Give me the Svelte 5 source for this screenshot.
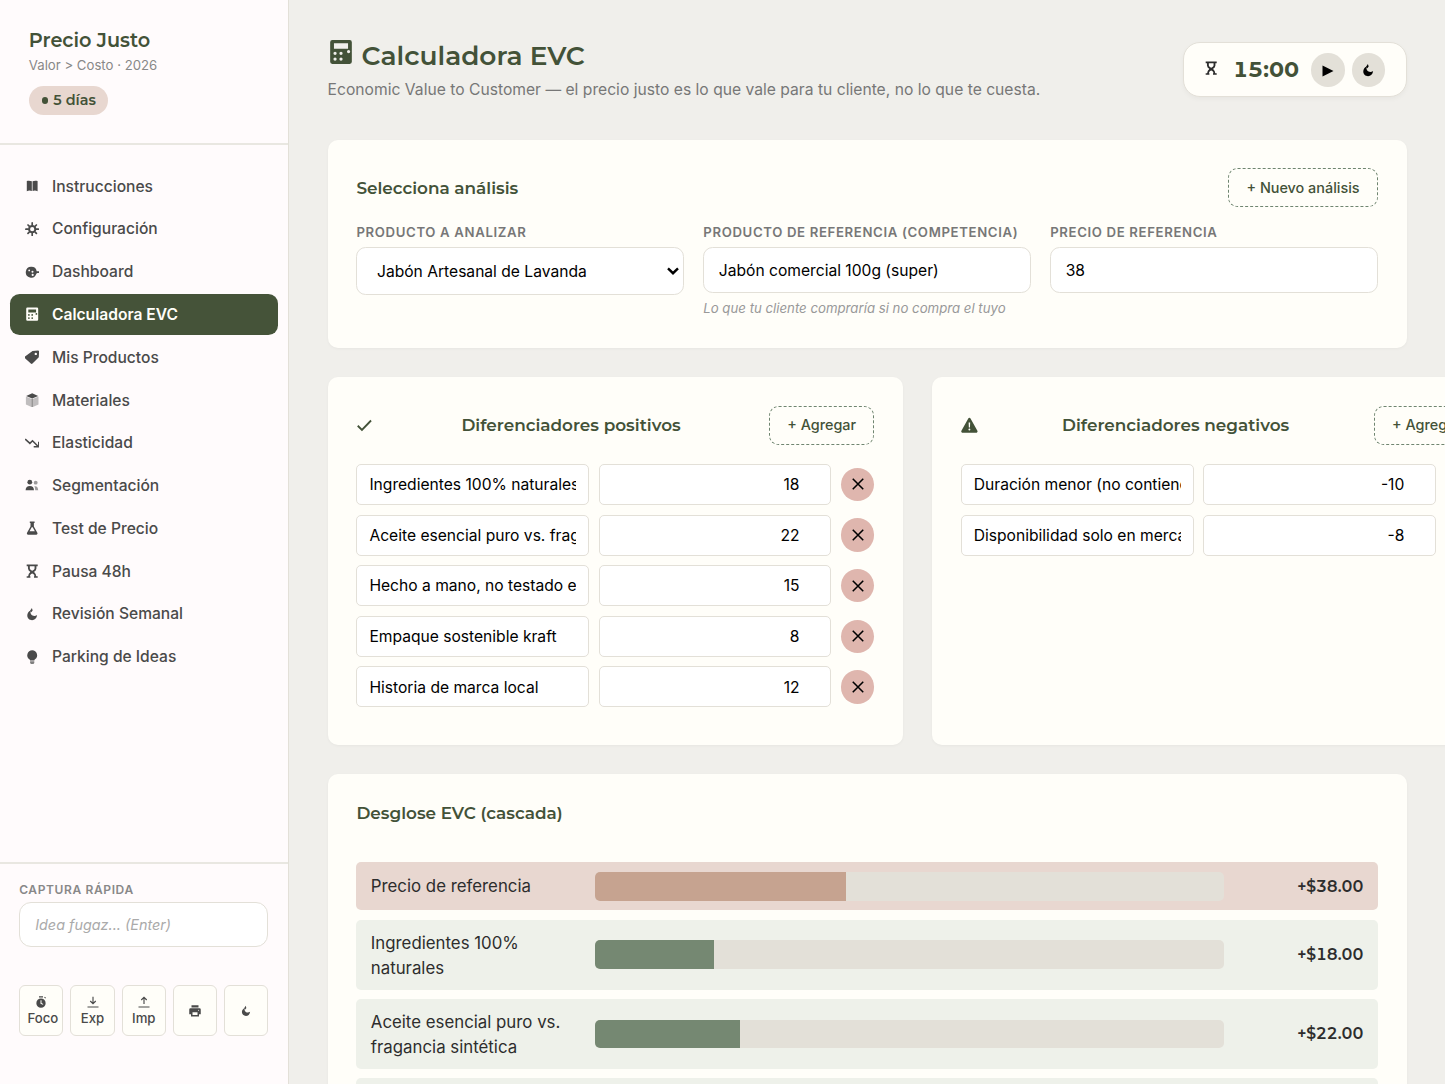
<script lang="ts">
	type Item = { name: string; value: number };

	const navItems = [
		{ icon: 'book', label: 'Instrucciones' },
		{ icon: 'gear', label: 'Configuración' },
		{ icon: 'palette', label: 'Dashboard' },
		{ icon: 'calc', label: 'Calculadora EVC' },
		{ icon: 'tag', label: 'Mis Productos' },
		{ icon: 'box', label: 'Materiales' },
		{ icon: 'trend', label: 'Elasticidad' },
		{ icon: 'people', label: 'Segmentación' },
		{ icon: 'flask', label: 'Test de Precio' },
		{ icon: 'hourglass', label: 'Pausa 48h' },
		{ icon: 'moon', label: 'Revisión Semanal' },
		{ icon: 'bulb', label: 'Parking de Ideas' }
	];

	const tools = [
		{ icon: 'timer', label: 'Foco' },
		{ icon: 'download', label: 'Exp' },
		{ icon: 'upload', label: 'Imp' },
		{ icon: 'printer', label: '' },
		{ icon: 'moon', label: '' }
	];

	let active = $state('Calculadora EVC');
	let idea = $state('');
	let reference = $state('Jabón comercial 100g (super)');
	let referencePrice = $state('38');

	let positives: Item[] = $state([
		{ name: 'Ingredientes 100% naturales', value: 18 },
		{ name: 'Aceite esencial puro vs. fragancia sintética', value: 22 },
		{ name: 'Hecho a mano, no testado en animales', value: 15 },
		{ name: 'Empaque sostenible kraft', value: 8 },
		{ name: 'Historia de marca local', value: 12 }
	]);
	let negatives: Item[] = $state([
		{ name: 'Duración menor (no contiene conservadores)', value: -10 },
		{ name: 'Disponibilidad solo en mercados', value: -8 }
	]);

	// The widest bar would be the EVC total
	const scale = 95;
	let cascade = $derived([
		{ name: 'Precio de referencia', value: Number(referencePrice), kind: 'base' },
		...positives.map((p) => ({ ...p, kind: 'plus' })),
		...negatives.map((n) => ({ ...n, kind: 'minus' }))
	]);

	function money(n: number): string {
		return (n < 0 ? '-' : '+') + '$' + Math.abs(n).toFixed(2);
	}

	function add(list: Item[]) {
		list.push({ name: '', value: 0 });
	}

	function remove(list: Item[], i: number) {
		list.splice(i, 1);
	}
</script>

{#snippet icon(name: string)}
	<svg class="icon" viewBox="0 0 24 24" fill="currentColor" aria-hidden="true">
		{#if name === 'book'}
			<path d="M3 3.500c3-.9 5.600-.7 8.400.4v16C8.600 18.800 6 18.600 3 20.500zM21 3.500c-3-.9-5.600-.7-8.400.4v16c2.800-1.100 5.400-1.300 8.400.6z" />
		{:else if name === 'gear'}
			<g fill="none" stroke="currentColor">
				<circle cx="12" cy="12" r="5.200" stroke-width="3.400" />
				<path stroke-width="2.800" stroke-linecap="round" d="M12 5V1.500M12 22.500V19M5 12H1.500M22.500 12H19M7 7 5 5M19 19l-2-2M7 17l-2 2M19 5l-2 2" />
			</g>
		{:else if name === 'palette'}
			<path fill-rule="evenodd" d="M10.500 3a9 9 0 1 0 8.300 12c.4-1 1-1.500 2-1.500H23a1 1 0 0 0 1-1v-1a1 1 0 0 0-1-1h-3.500A9 9 0 0 0 10.500 3zM7 7.500a1.500 1.500 0 1 1 0 3 1.500 1.500 0 0 1 0-3zm5.500 2a1.700 1.700 0 1 1 0 3.400 1.700 1.700 0 0 1 0-3.400zm.3 5.200a1.800 1.800 0 1 1 0 3.600 1.800 1.800 0 0 1 0-3.600z" />
		{:else if name === 'calc'}
			<path fill-rule="evenodd" d="M4 1h16a2 2 0 0 1 2 2v18a2 2 0 0 1-2 2H4a2 2 0 0 1-2-2V3a2 2 0 0 1 2-2zm1.500 3v5h13V4zM6.500 11.700a1.500 1.500 0 1 0 0 3 1.500 1.500 0 0 0 0-3zm5.500 0a1.500 1.500 0 1 0 0 3 1.500 1.500 0 0 0 0-3zm7-1.600a1.500 1.500 0 1 0 0 3 1.500 1.500 0 0 0 0-3zM6.500 17a1.500 1.500 0 1 0 0 3 1.500 1.500 0 0 0 0-3zm5.500 0a1.500 1.500 0 1 0 0 3 1.500 1.500 0 0 0 0-3z" />
		{:else if name === 'tag'}
			<path fill-rule="evenodd" d="M12.500 1.500 22 1a1.500 1.500 0 0 1 1.500 1.500L23 12 12.500 22.500a2 2 0 0 1-2.800 0L-.3 13.700a2 2 0 0 1 0-2.800zM18 4.500a2 2 0 1 0 0 4 2 2 0 0 0 0-4z" />
		{:else if name === 'box'}
			<path d="m12 .5 10 4.300-10 4.400L2 4.800z" />
			<path opacity=".35" d="M1.500 6 11.200 10v13.500L1.500 19zM22.500 6 12.800 10v13.500l9.700-4.500z" />
			<path opacity=".7" d="M11.100 9.500h1.800v14h-1.800z" />
		{:else if name === 'trend'}
			<path fill="none" stroke="currentColor" stroke-width="2.600" d="m.3 5 7.900 7.200 4.300-4.200 9.500 9.500M23 9.500v8.500h-8.500" />
		{:else if name === 'people'}
			<circle cx="8" cy="7" r="4" />
			<path d="M1 20.500c0-4.500 2.700-7 7-7s7 2.500 7 7z" />
			<circle cx="17.800" cy="7.800" r="3.200" opacity=".55" />
			<path opacity=".55" d="M15.500 13.800c4.200-.8 6.500 2 6.500 6.700h-5c0-2.800-.4-4.900-1.500-6.700z" />
		{:else if name === 'flask'}
			<path fill-rule="evenodd" d="M8 1h8v2.200h-1.200V9l5.800 10.700c.8 1.600 0 3.300-1.800 3.300H5.200c-1.800 0-2.600-1.700-1.800-3.300L9.200 9V3.200H8zM11.200 10.500l-3.600 6.800h8.800l-3.600-6.800z" />
		{:else if name === 'hourglass'}
			<path d="M2.800 1h18.400v2.600H2.800zM2.800 20.400H9V23H2.800zM15 20.400h6.200V23H15z" />
			<path fill="none" stroke="currentColor" stroke-width="3.100" d="M6.500 2.500v5c0 4 4 4 8 7.500 2.500 2 3 4 3 6.500M17.500 2.500v5c0 4-4 4-8 7.500-2.500 2-3 4-3 6.500" />
			<path d="M9 13.500h6l2 4.500-5-2.500L7 18z" />
		{:else if name === 'moon'}
			<path d="M9.500 6c-1.200 3.500.2 7.800 4 8.800 2.400.6 4.500.1 6.700-1.300-.6 5.500-4 8.500-8.400 8.500-4.600 0-8-3.300-8-7.800 0-3.500 2-6.800 5.700-8.200z" />
			<path d="M8.200 6.500 11.500 1.500l1.200 4.500-2.200 2.800z" />
		{:else if name === 'bulb'}
			<path d="M12 .5a8.300 8.300 0 0 1 4.800 15c-.8.6-1.200 1.200-1.200 2.200H8.400c0-1-.4-1.600-1.200-2.200A8.300 8.300 0 0 1 12 .5z" />
			<path opacity=".7" d="M8.500 18.800h7v2.200c0 1.500-1.200 2.500-2.500 2.500h-2c-1.300 0-2.500-1-2.500-2.500z" />
		{:else if name === 'timer'}
			<path fill-rule="evenodd" d="M12 5a9.300 9.300 0 1 1 0 18.600A9.300 9.300 0 0 1 12 5zm-1 3.500v7l5 2 .6-1.700-3.600-1.600V8.500zM8 .5h8v2.300H8zM19.500 1.500l2.500 2-1.200 1.300-2.500-2z" />
		{:else if name === 'download'}
			<path fill="none" stroke="currentColor" stroke-width="2.300" d="M12 1.500v14M6.500 10l5.500 5.500 5.500-5.500M1 22h22" />
		{:else if name === 'upload'}
			<path fill="none" stroke="currentColor" stroke-width="2.300" d="M12 16V2.500M6.500 8 12 2.500 17.500 8M1 22h22" />
		{:else if name === 'printer'}
			<path fill-rule="evenodd" d="M5 .5h14V5H5zM3 6.500h18a2.500 2.500 0 0 1 2.500 2.500v9.500H20V23H4v-4.500H.5V9A2.500 2.500 0 0 1 3 6.500zm4 8V20h10v-5.500zM19 9.500a1 1 0 1 0 0 2 1 1 0 0 0 0-2z" />
		{:else if name === 'check'}
			<path fill="none" stroke="currentColor" stroke-width="2.600" d="m2.500 12.500 6 6L21.500 5" />
		{:else if name === 'warning'}
			<path fill-rule="evenodd" d="M12 1c.7 0 1.300.4 1.600 1l9.800 17.800c.7 1.300-.2 2.700-1.600 2.700H2.200c-1.400 0-2.300-1.400-1.600-2.700L10.400 2c.3-.6.900-1 1.600-1zM10.900 8l.3 7h1.600l.3-7zm1.100 8.500a1.400 1.400 0 1 0 0 2.800 1.400 1.400 0 0 0 0-2.800z" />
		{:else if name === 'close'}
			<path fill="none" stroke="currentColor" stroke-width="2.600" d="m3 3 18 18M21 3 3 21" />
		{/if}
	</svg>
{/snippet}

{#snippet diffCard(title: string, iconName: string, list: Item[])}
	<section class="card diff-card">
		<div class="card-header">
			<span class="card-icon">{@render icon(iconName)}</span>
			<h3 class="diff-title">{title}</h3>
			<button class="btn-dashed" onclick={() => add(list)}>+ Agregar</button>
		</div>
		{#each list as item, i}
			<div class="diff-row">
				<input class="diff-name" bind:value={item.name} />
				<input class="diff-value" inputmode="numeric" bind:value={item.value} />
				<button class="btn-remove" aria-label="Eliminar" onclick={() => remove(list, i)}>
					{@render icon('close')}
				</button>
			</div>
		{/each}
	</section>
{/snippet}

<div class="app">
	<aside class="sidebar">
		<div class="brand">
			<h1 class="brand-name">Precio Justo</h1>
			<p class="brand-sub">Valor &gt; Costo · 2026</p>
			<span class="streak"><i class="dot"></i>5 días</span>
		</div>

		<nav>
			{#each navItems as item}
				<button class="nav-item" class:active={active === item.label} onclick={() => (active = item.label)}>
					{@render icon(item.icon)}
					<span>{item.label}</span>
				</button>
			{/each}
		</nav>

		<div class="sidebar-footer">
			<label class="capture-label" for="capture">Captura rápida</label>
			<input id="capture" class="capture" placeholder="Idea fugaz... (Enter)" bind:value={idea} />
			<div class="tools">
				{#each tools as tool}
					<button class="tool">
						{@render icon(tool.icon)}
						{#if tool.label}<span>{tool.label}</span>{/if}
					</button>
				{/each}
			</div>
		</div>
	</aside>

	<main>
		<header class="page-header">
			<div>
				<h2 class="page-title">{@render icon('calc')}<span>Calculadora EVC</span></h2>
				<p class="page-sub">Economic Value to Customer — el precio justo es lo que vale para tu cliente, no lo que te cuesta.</p>
			</div>
			<div class="timer">
				{@render icon('hourglass')}
				<span class="time">15:00</span>
				<button class="round" aria-label="Iniciar">
					<svg class="play" viewBox="0 0 12 12"><path d="M0.500 0.500 11.500 6 0.500 11.500z" /></svg>
				</button>
				<button class="round" aria-label="Reiniciar">{@render icon('moon')}</button>
			</div>
		</header>

		<section class="card select-card">
			<div class="card-header">
				<h3 class="select-title">Selecciona análisis</h3>
				<button class="btn-dashed">+ Nuevo análisis</button>
			</div>
			<div class="fields">
				<div class="field">
					<label for="product">Producto a analizar</label>
					<div class="select-wrap">
						<select id="product">
							<option>Jabón Artesanal de Lavanda</option>
						</select>
						<svg class="chevron" viewBox="0 0 12 8"><path d="m1 1.300 5 4.900 5-4.900" /></svg>
					</div>
				</div>
				<div class="field">
					<label for="reference">Producto de referencia (competencia)</label>
					<input id="reference" bind:value={reference} />
					<small>Lo que tu cliente compraría si no compra el tuyo</small>
				</div>
				<div class="field">
					<label for="price">Precio de referencia</label>
					<input id="price" inputmode="numeric" bind:value={referencePrice} />
				</div>
			</div>
		</section>

		<div class="diffs">
			{@render diffCard('Diferenciadores positivos', 'check', positives)}
			{@render diffCard('Diferenciadores negativos', 'warning', negatives)}
		</div>

		<section class="card">
			<h3 class="cascade-title">Desglose EVC (cascada)</h3>
			<div class="cascade">
				{#each cascade as row}
					<div class="cascade-row {row.kind}">
						<span class="cascade-name">{row.name}</span>
						<div class="track">
							<div class="fill" style="width: {(Math.abs(row.value) / scale) * 100}%"></div>
						</div>
						<span class="amount">{money(row.value)}</span>
					</div>
				{/each}
			</div>
		</section>
	</main>
</div>

<style>
	:global(body) {
		background: #f0efeb;
		overflow: hidden;
	}

	.app {
		--green: #435238;
		--line: #e3e0d8;
		--cream: #fffef9;
		--heading: Montserrat, Inter, sans-serif;
		display: flex;
		height: 1084px;
		overflow: hidden;
		font-family: Inter, sans-serif;
		color: #2d2d2d;
	}

	.app :global(*) {
		box-sizing: border-box;
	}

	h1, h2, h3, p {
		margin: 0;
	}

	button, input, select {
		font-family: inherit;
		margin: 0;
	}

	button {
		cursor: pointer;
		padding: 0;
	}

	h1, h2, h3 {
		font-family: var(--heading);
		font-weight: 600;
		color: var(--green);
		white-space: nowrap;
	}

	.icon {
		display: block;
		width: 14.400px;
		height: 14.400px;
		flex-shrink: 0;
	}

	/* Sidebar */
	.sidebar {
		width: 289px;
		flex-shrink: 0;
		display: flex;
		flex-direction: column;
		background: #fffbfc;
		border-right: 1.200px solid var(--line);
	}

	.brand {
		height: 144.800px;
		padding: 28.800px 28.800px 0;
		border-bottom: 2px solid #e9e7e1;
	}

	.brand-name {
		font-size: 19.250px;
		line-height: 22px;
	}

	.brand-sub {
		margin-top: 5px;
		font-size: 13.200px;
		line-height: 19px;
		color: #888;
	}

	.streak {
		display: inline-flex;
		align-items: center;
		gap: 5px;
		height: 29px;
		margin-top: 10.800px;
		padding: 0 12px 0 13px;
		border-radius: 15px;
		background: #e8d7d0;
		color: var(--green);
		font-family: var(--heading);
		font-size: 14.400px;
		font-weight: 600;
	}

	.dot {
		width: 6.500px;
		height: 6.500px;
		margin-top: 1px;
		border-radius: 50%;
		background: currentColor;
	}

	nav {
		flex: 1;
		display: flex;
		flex-direction: column;
		gap: 2.400px;
		padding: 21.200px 10.400px 0 9.600px;
	}

	.nav-item {
		display: flex;
		align-items: center;
		gap: 12.800px;
		height: 40.400px;
		padding: 0 15.200px;
		border: 0;
		border-radius: 9.600px;
		background: none;
		color: #4a4a4a;
		font-size: 15.600px;
		font-weight: 500;
		text-align: left;
	}

	.nav-item.active {
		background: #455339;
		color: var(--cream);
		font-weight: 600;
	}

	.sidebar-footer {
		height: 222px;
		padding: 17px 19.600px 0 19.200px;
		border-top: 2px solid #e9e7e1;
	}

	.capture-label {
		display: block;
		font-size: 12px;
		line-height: 18px;
		font-weight: 600;
		letter-spacing: 0.620px;
		text-transform: uppercase;
		color: #888;
	}

	.capture {
		display: block;
		width: 100%;
		height: 44.500px;
		margin-top: 3px;
		padding: 0 15px;
		border: 1.500px solid var(--line);
		border-radius: 12px;
		font-size: 14.400px;
		background: #fff;
	}

	.capture::placeholder {
		color: #aaa;
		font-style: italic;
	}

	.tools {
		display: grid;
		grid-template-columns: repeat(5, minmax(0, 1fr));
		gap: 7.200px;
		margin-top: 38.500px;
	}

	.tool {
		display: flex;
		flex-direction: column;
		align-items: center;
		justify-content: center;
		gap: 1px;
		height: 51px;
		padding: 1px 7.200px 0;
		border: 1.200px solid var(--line);
		border-radius: 6px;
		background: var(--cream);
		color: #4a4a4a;
		font-size: 13.200px;
		line-height: 18px;
		font-weight: 500;
	}

	.tool span {
		width: 100%;
		text-align: center;
		white-space: nowrap;
	}

	.tool .icon {
		width: 12px;
		height: 12px;
	}

	/* Main column */
	main {
		flex: 1;
		min-width: 0;
		padding: 38.400px 38.400px 0 38.600px;
	}

	.page-header {
		display: flex;
		justify-content: space-between;
		height: 101.200px;
	}

	.page-title {
		display: flex;
		gap: 8px;
		font-size: 26.450px;
		line-height: 35px;
	}

	.page-title .icon {
		width: 26px;
		height: 26px;
		margin-top: 0.600px;
	}

	.page-sub {
		margin-top: 4px;
		font-size: 15.660px;
		line-height: 26px;
		color: #777;
	}

	.timer {
		display: flex;
		align-items: center;
		width: 224px;
		height: 55.500px;
		margin-top: 3.600px;
		padding-left: 20.500px;
		border: 1.500px solid var(--line);
		border-radius: 17px;
		background: var(--cream);
		box-shadow: 0 2px 5px rgba(0, 0, 0, 0.04);
	}

	.timer > .icon {
		margin-bottom: 3.500px;
	}

	.time {
		width: 78px;
		margin: 0 0 1.500px 14.500px;
		font-family: var(--heading);
		font-size: 21.600px;
		font-weight: 700;
		font-variant-numeric: tabular-nums;
		color: var(--green);
	}

	.round {
		display: flex;
		align-items: center;
		justify-content: center;
		width: 33.600px;
		height: 33.600px;
		margin-right: 7.200px;
		border: 0;
		border-radius: 50%;
		background: #e3e0d8;
		color: #000;
	}

	.play {
		width: 12px;
		height: 12px;
		margin-top: 3px;
	}

	.card {
		padding: 28.800px;
		border-radius: 10px;
		background: var(--cream);
		box-shadow: 0 1px 3px rgba(0, 0, 0, 0.04);
	}

	.card-header {
		display: flex;
		align-items: center;
		justify-content: space-between;
		height: 39px;
	}

	h3 {
		font-size: 16.850px;
		line-height: 24px;
	}

	.card-icon {
		color: var(--green);
	}

	.card-icon .icon {
		width: 16.800px;
		height: 16.800px;
	}

	.btn-dashed {
		height: 39px;
		padding: 0 17.300px 1px;
		border: 1.200px dashed #6f8570;
		border-radius: 9.600px;
		background: none;
		color: var(--green);
		font-size: 14.400px;
		font-weight: 500;
		white-space: nowrap;
	}

	.select-card {
		height: 208.500px;
	}

	.fields {
		display: grid;
		grid-template-columns: repeat(3, 1fr);
		gap: 19.200px;
		margin-top: 16px;
	}

	.field {
		display: flex;
		flex-direction: column;
	}

	.field label {
		font-size: 13.200px;
		line-height: 19px;
		font-weight: 600;
		letter-spacing: 0.640px;
		text-transform: uppercase;
		color: #777;
		margin-bottom: 4.500px;
		white-space: nowrap;
	}

	.field input,
	.field select {
		width: 100%;
		height: 46px;
		padding: 1.500px 14.600px 0;
		border: 1.200px solid var(--line);
		border-radius: 9.600px;
		background: #fff;
		color: #000;
		font-size: 15.620px;
	}

	.select-wrap {
		display: grid;
		align-items: center;
	}

	.select-wrap select,
	.chevron {
		grid-area: 1 / 1;
	}

	.field select {
		appearance: none;
		height: 48px;
		padding-left: 19.600px;
	}

	.chevron {
		justify-self: end;
		width: 12px;
		height: 8px;
		margin-right: 5px;
		fill: none;
		stroke: #000;
		stroke-width: 2.400;
		pointer-events: none;
	}

	.field small {
		margin-top: 5.500px;
		font-size: 13.230px;
		line-height: 20px;
		font-style: italic;
		color: #999;
		white-space: nowrap;
	}

	.diffs {
		display: grid;
		grid-template-columns: 575.600px 576px;
		gap: 28.800px;
		margin: 28.800px 0;
	}

	.diff-card {
		height: 368.600px;
	}

	.diff-card .card-header {
		margin-bottom: 19.200px;
	}

	.diff-row {
		display: grid;
		grid-template-columns: 1fr 1fr 33.600px;
		align-items: center;
		gap: 9.600px;
		margin-bottom: 9.600px;
	}

	.diff-row input {
		width: 100%;
		min-width: 0;
		height: 41.050px;
		padding: 0.400px 12px 0;
		border: 1.200px solid var(--line);
		border-radius: 5px;
		background: #fff;
		color: #000;
		font-size: 15.620px;
	}

	.diff-row .diff-value {
		padding-right: 30.700px;
		text-align: right;
	}

	.btn-remove {
		display: flex;
		align-items: center;
		justify-content: center;
		width: 33.600px;
		height: 33.600px;
		border: 0;
		border-radius: 50%;
		background: #dfb6ae;
		color: #000;
	}

	.btn-remove .icon {
		width: 14px;
		height: 14px;
	}

	.cascade-title {
		line-height: 20px;
	}

	.cascade {
		display: flex;
		flex-direction: column;
		gap: 9.600px;
		margin-top: 39.300px;
	}

	.cascade-row {
		display: grid;
		grid-template-columns: 204.800px 1fr 120.400px;
		align-items: center;
		gap: 19.200px;
		padding: 9.600px 14.400px;
		border-radius: 5px;
		background: #eef1ea;
	}

	.cascade-row.base {
		background: #e8d7d0;
	}

	.cascade-name {
		margin-bottom: -1.200px;
		padding-top: 1.600px;
		font-size: 16.820px;
		line-height: 25px;
	}

	.base .cascade-name {
		padding-top: 0;
	}

	.track {
		height: 28.800px;
		border-radius: 5px;
		background: #e3e0d8;
		overflow: hidden;
	}

	.fill {
		height: 100%;
		background: #758872;
	}

	.base .fill {
		background: #c6a390;
	}

	.minus .fill {
		background: #dfb6ae;
	}

	.amount {
		font-family: var(--heading);
		font-size: 15.600px;
		font-weight: 600;
		font-variant-numeric: tabular-nums;
		text-align: right;
	}
</style>
